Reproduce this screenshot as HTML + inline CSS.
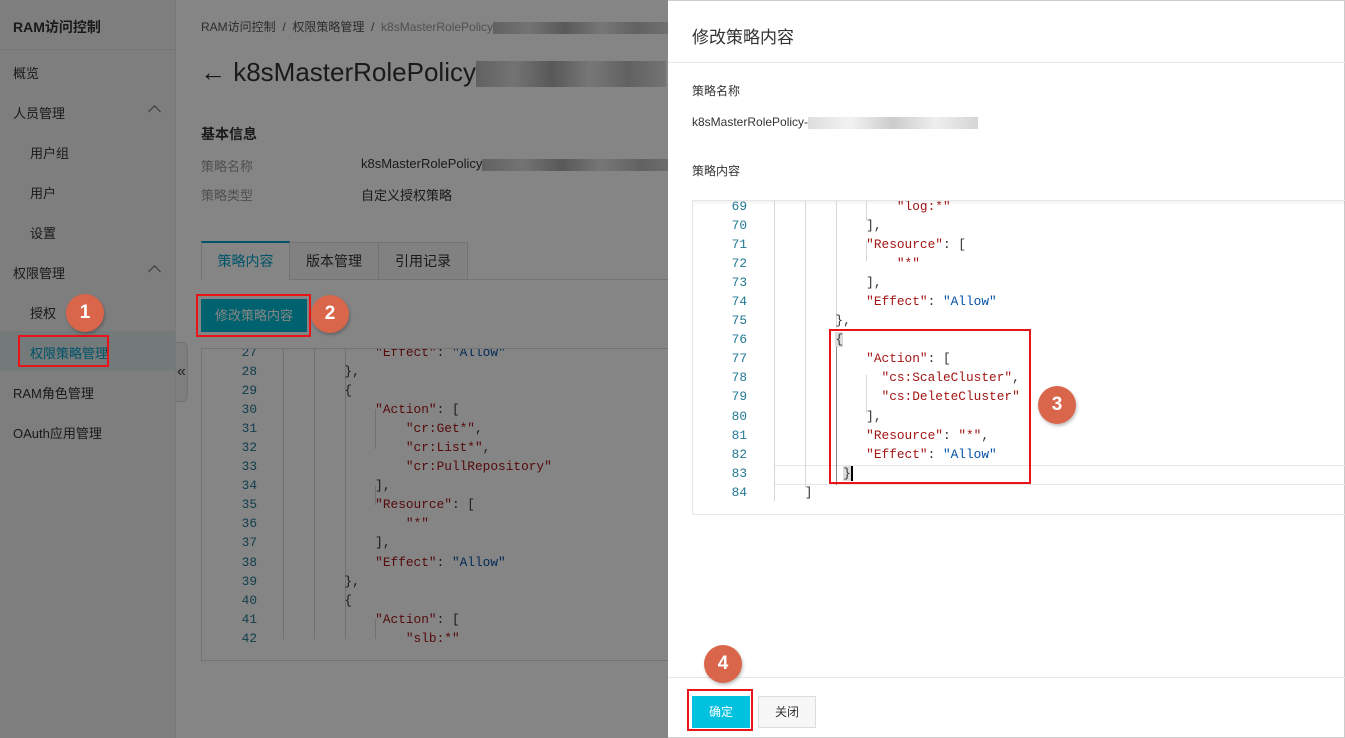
<!DOCTYPE html>
<html><head><meta charset="utf-8"><style>
*{margin:0;padding:0;box-sizing:border-box}
body{width:1345px;height:738px;position:relative;overflow:hidden;background:#fff;font-family:"Liberation Sans","Noto Sans CJK SC",sans-serif;font-size:13px;color:#333}
.abs{position:absolute}
.side{left:0;top:0;width:176px;height:738px;background:#f2f2f2;border-right:1px solid #e6e6e6}
.side .it{position:absolute;left:13px;font-size:13px;color:#333;white-space:nowrap}
.side .sub{left:30px}
.chev{position:absolute;left:150px;width:9px;height:9px;border-left:1.3px solid #666;border-top:1.3px solid #666;transform:rotate(45deg)}
.code{font-family:"Liberation Mono",monospace;font-size:12.8px;line-height:19.05px;white-space:pre}
.ln{color:#237893;text-align:right;width:40px;position:absolute}
.k{color:#a31515}.v{color:#0451a5}.p{color:#333}
.g{position:absolute;width:1px;background:#d6d6d6}
.mask{left:0;top:0;width:668px;height:738px;background:rgba(0,0,0,0.48)}
.circ{position:absolute;width:38px;height:38px;border-radius:50%;background:#d9664a;color:#fff;font-weight:bold;font-size:19px;text-align:center;line-height:38px;box-shadow:1px 2px 3px rgba(0,0,0,.25);font-family:"Liberation Sans",sans-serif}
.red{position:absolute;border:2px solid #e8141a}
.blur{display:inline-block;height:12px;background:linear-gradient(90deg,#bbb,#ddd 20%,#aaa 40%,#e4e4e4 60%,#bbb 80%,#ddd);vertical-align:middle}
</style></head><body>
<div class="abs side">
<div class="it" style="top:17px;font-size:14px;font-weight:bold;color:#333">RAM访问控制</div>
<div class="abs" style="left:0;top:49px;width:176px;height:1px;background:#e3e3e3"></div>
<div class="it" style="top:63px">概览</div>
<div class="it" style="top:103px">人员管理</div><div class="chev" style="top:107px"></div>
<div class="it sub" style="top:143px">用户组</div>
<div class="it sub" style="top:183px">用户</div>
<div class="it sub" style="top:223px">设置</div>
<div class="it" style="top:263px">权限管理</div><div class="chev" style="top:267px"></div>
<div class="it sub" style="top:303px">授权</div>
<div class="abs" style="left:0;top:331px;width:176px;height:40px;background:#dfe8ea"></div>
<div class="it sub" style="top:343px;color:#00a2ca">权限策略管理</div>
<div class="it" style="top:383px">RAM角色管理</div>
<div class="it" style="top:423px">OAuth应用管理</div>
</div>
<div class="abs" style="left:176px;top:342px;width:12px;height:60px;background:#f2f2f2;border:1px solid #ddd;border-left:none;border-radius:0 6px 6px 0;font-size:16px;color:#444;line-height:58px;text-align:center">«</div>
<div class="abs" style="left:201px;top:18px;font-size:12px;color:#555;white-space:nowrap">RAM访问控制 &nbsp;/&nbsp; 权限策略管理 &nbsp;/&nbsp; <span style="color:#999">k8sMasterRolePolicy</span><span class="blur" style="width:180px"></span></div>
<div class="abs" style="left:200px;top:57px;font-size:26px;color:#333;white-space:nowrap">← k8sMasterRolePolicy<span class="blur" style="width:190px;height:26px"></span></div>
<div class="abs" style="left:201px;top:124px;font-size:14px;font-weight:bold">基本信息</div>
<div class="abs" style="left:201px;top:156px;color:#999">策略名称</div>
<div class="abs" style="left:361px;top:156px;white-space:nowrap">k8sMasterRolePolicy<span class="blur" style="width:200px"></span></div>
<div class="abs" style="left:201px;top:185px;color:#999">策略类型</div>
<div class="abs" style="left:361px;top:185px">自定义授权策略</div>
<div class="abs" style="left:201px;top:279px;width:467px;height:1px;background:#ddd"></div>
<div class="abs" style="left:201px;top:241px;width:89px;height:39px;border:1px solid #ddd;border-top:2px solid #00a2ca;background:#fff;border-bottom:none;font-size:14px;color:#00a2ca;text-align:center;line-height:36px">策略内容</div>
<div class="abs" style="left:290px;top:242px;width:89px;height:38px;border:1px solid #ddd;border-left:none;background:#f7f7f7;font-size:14px;text-align:center;line-height:36px">版本管理</div>
<div class="abs" style="left:379px;top:242px;width:89px;height:38px;border:1px solid #ddd;border-left:none;background:#f7f7f7;font-size:14px;text-align:center;line-height:36px">引用记录</div>
<div class="abs" style="left:201px;top:299px;width:106px;height:33px;background:#00bcd4;color:#fff;text-align:center;line-height:33px">修改策略内容</div>
<div class="abs" style="left:201px;top:348px;width:467px;height:313px;border:1px solid #ddd;border-right:none;overflow:hidden">
<div class="g" style="left:81px;top:0;height:290px"></div><div class="g" style="left:112px;top:0;height:290px"></div><div class="g" style="left:143px;top:0;height:290px"></div><div class="g" style="left:173px;top:137px;height:19px"></div><div class="g" style="left:173px;top:60px;height:40px"></div><div class="g" style="left:173px;top:270px;height:20px"></div>
<div class="code abs" style="left:0;top:-6px;width:467px">
<div class="ln" style="left:15px;top:0">27
28
29
30
31
32
33
34
35
36
37
38
39
40
41
42</div>
<div class="abs" style="left:81px;top:0">            <span class="k">"Effect"</span>: <span class="v">"Allow"</span>
        },
        {
            <span class="k">"Action"</span>: [
                <span class="k">"cr:Get*"</span>,
                <span class="k">"cr:List*"</span>,
                <span class="k">"cr:PullRepository"</span>
            ],
            <span class="k">"Resource"</span>: [
                <span class="k">"*"</span>
            ],
            <span class="k">"Effect"</span>: <span class="v">"Allow"</span>
        },
        {
            <span class="k">"Action"</span>: [
                <span class="k">"slb:*"</span></div>
</div></div>
<div class="abs mask"></div>
<div class="abs" style="left:668px;top:0;width:677px;height:738px;background:#fff;border:1px solid #ccc;border-left:none">
<div class="abs" style="left:24px;top:22px;font-size:17px;color:#333">修改策略内容</div>
<div class="abs" style="left:0;top:61px;width:677px;height:1px;background:#e6e6e6"></div>
<div class="abs" style="left:24px;top:81px;font-size:12px">策略名称</div>
<div class="abs" style="left:24px;top:114px;font-size:12px;white-space:nowrap">k8sMasterRolePolicy-<span class="blur" style="width:170px;background:linear-gradient(90deg,#ddd,#f2f2f2 25%,#ccc 50%,#eee 75%,#d5d5d5)"></span></div>
<div class="abs" style="left:24px;top:161px;font-size:12px">策略内容</div>
<div class="abs" style="left:24px;top:199px;width:653px;height:315px;border:1px solid #e6e6e6;border-right:none;box-shadow:inset 0 3px 4px -2px rgba(0,0,0,.08);overflow:hidden">
<div class="abs" style="left:82px;top:264px;width:580px;height:20px;border-top:1px solid #e6e6e6;border-bottom:1px solid #e6e6e6"></div>
<div class="g" style="left:81px;top:0;height:300px"></div><div class="g" style="left:112px;top:0;height:286px"></div><div class="g" style="left:143px;top:0;height:127px"></div><div class="g" style="left:143px;top:137px;height:147px;background:#888"></div><div class="g" style="left:173px;top:0;height:20px"></div><div class="g" style="left:173px;top:40px;height:20px"></div><div class="g" style="left:173px;top:174px;height:38px"></div>
<div class="code abs" style="left:0;top:-4px;width:653px">
<div class="ln" style="left:14px;top:0">69
70
71
72
73
74
75
76
77
78
79
80
81
82
83
84</div>
<div class="abs" style="left:81px;top:0">                <span class="k">"log:*"</span>
            ],
            <span class="k">"Resource"</span>: [
                <span class="k">"*"</span>
            ],
            <span class="k">"Effect"</span>: <span class="v">"Allow"</span>
        },
        <span style="background:#ddd">{</span>
            <span class="k">"Action"</span>: [
              <span class="k">"cs:ScaleCluster"</span>,
              <span class="k">"cs:DeleteCluster"</span>
            ],
            <span class="k">"Resource"</span>: <span class="k">"*"</span>,
            <span class="k">"Effect"</span>: <span class="v">"Allow"</span>
         <span style="background:#ddd;border-right:2px solid #000">}</span>
    ]</div>
</div></div>
<div class="abs" style="left:0;top:676px;width:677px;height:1px;background:#e6e6e6"></div>
<div class="abs" style="left:24px;top:695px;width:58px;height:32px;background:#00c1de;color:#fff;font-size:12px;text-align:center;line-height:32px">确定</div>
<div class="abs" style="left:90px;top:695px;width:58px;height:32px;background:#f7f7f7;border:1px solid #ddd;font-size:12px;text-align:center;line-height:30px">关闭</div>
</div>
<div class="red" style="left:18px;top:335px;width:91px;height:32px"></div>
<div class="red" style="left:196px;top:294px;width:115px;height:43px"></div>
<div class="red" style="left:829px;top:329px;width:202px;height:155px"></div>
<div class="red" style="left:687px;top:689px;width:66px;height:42px"></div>
<div class="circ" style="left:66px;top:294px">1</div>
<div class="circ" style="left:311px;top:295px">2</div>
<div class="circ" style="left:1038px;top:386px">3</div>
<div class="circ" style="left:704px;top:645px">4</div>
</body></html>
